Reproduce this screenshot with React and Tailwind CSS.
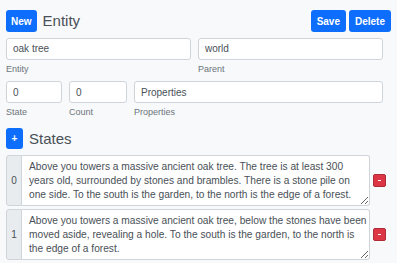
import React, { useState } from 'react';

const states = [
  {
    text: 'Above you towers a massive ancient oak tree. The tree is at least 300 years old, surrounded by stones and brambles. There is a stone pile on one side. To the south is the garden, to the north is the edge of a forest.',
    pad: 'pr-[3px]',
  },
  {
    text: 'Above you towers a massive ancient oak tree, below the stones have been moved aside, revealing a hole. To the south is the garden, to the north is the edge of a forest.',
    pad: 'pr-[1px]',
  },
];

const inputCls =
  'w-full h-[22px] px-[6px] bg-white border border-[#ced4da] rounded-[3px] text-[10px] text-[#495057] outline-none';

const Field = ({ value, label, className = '' }) => (
  <div className={className}>
    <input className={inputCls} defaultValue={value} />
    <div className="mt-[2px] h-[14px] leading-[14px] text-[9px] text-[#6c757d]">{label}</div>
  </div>
);

const App = () => {
  const [entity] = useState({ name: 'oak tree', parent: 'world', state: '0', count: '0', properties: 'Properties' });

  return (
    <div className="w-[397px] h-[263px] bg-[#f8f9fa] px-[6px] pt-[10px] font-['Liberation_Sans',Arial,sans-serif] text-[#495057] overflow-hidden">
      {/* Header */}
      <div className="flex items-center justify-between">
        <div className="flex items-center gap-[6px]">
          <button className="h-[22px] px-[5px] rounded-[3px] bg-[#0d6efd] text-white text-[10px] font-bold">
            New
          </button>
          <h4 className="text-[15px] leading-[20px] text-[#495057]">Entity</h4>
        </div>
        <div className="flex gap-[3px]">
          <button className="h-[22px] px-[6px] rounded-[3px] bg-[#0d6efd] text-white text-[10px] font-bold">
            Save
          </button>
          <button className="h-[22px] px-[6px] rounded-[3px] bg-[#0d6efd] text-white text-[10px] font-bold">
            Delete
          </button>
        </div>
      </div>

      {/* Entity fields */}
      <div className="w-[377px] mt-[3px] grid grid-cols-2 gap-x-[7px]">
        <Field value={entity.name} label="Entity" />
        <Field value={entity.parent} label="Parent" />
      </div>
      <div className="w-[377px] mt-[3px] flex gap-[7px]">
        <Field value={entity.state} label="State" className="w-[56px]" />
        <Field value={entity.count} label="Count" className="w-[58px]" />
        <Field value={entity.properties} label="Properties" className="flex-1" />
      </div>

      {/* States */}
      <div className="mt-[9px] flex items-center gap-[6px]">
        <button className="w-[17px] h-[21px] rounded-[3px] bg-[#0d6efd] text-white text-[10px] font-bold leading-none">
          +
        </button>
        <h4 className="text-[15px] leading-[20px] text-[#495057]">States</h4>
      </div>

      <div className="mt-[6px] flex flex-col gap-[3px]">
        {states.map((s, i) => (
          <div key={i} className="flex items-center">
            <div className="w-[364px] flex">
              <div className="w-[16px] flex items-center justify-center bg-[#e9ecef] border border-[#ced4da] rounded-l-[3px] text-[10px]">
                {i}
              </div>
              <textarea
                className={`flex-1 h-[51px] pl-[7px] ${s.pad} pt-[4px] pb-[3px] overflow-hidden bg-white border border-l-0 border-[#ced4da] rounded-r-[3px] text-[10.2px] leading-[14px] text-[#495057] outline-none`}
                defaultValue={s.text}
              />
            </div>
            <button className="ml-[3px] w-[13px] h-[13px] flex items-center justify-center bg-[#dc3545] border border-[#b02a37] rounded-[2px]">
              <span className="w-[3px] h-[1px] bg-white" />
            </button>
          </div>
        ))}
      </div>
    </div>
  );
};

export default App;
